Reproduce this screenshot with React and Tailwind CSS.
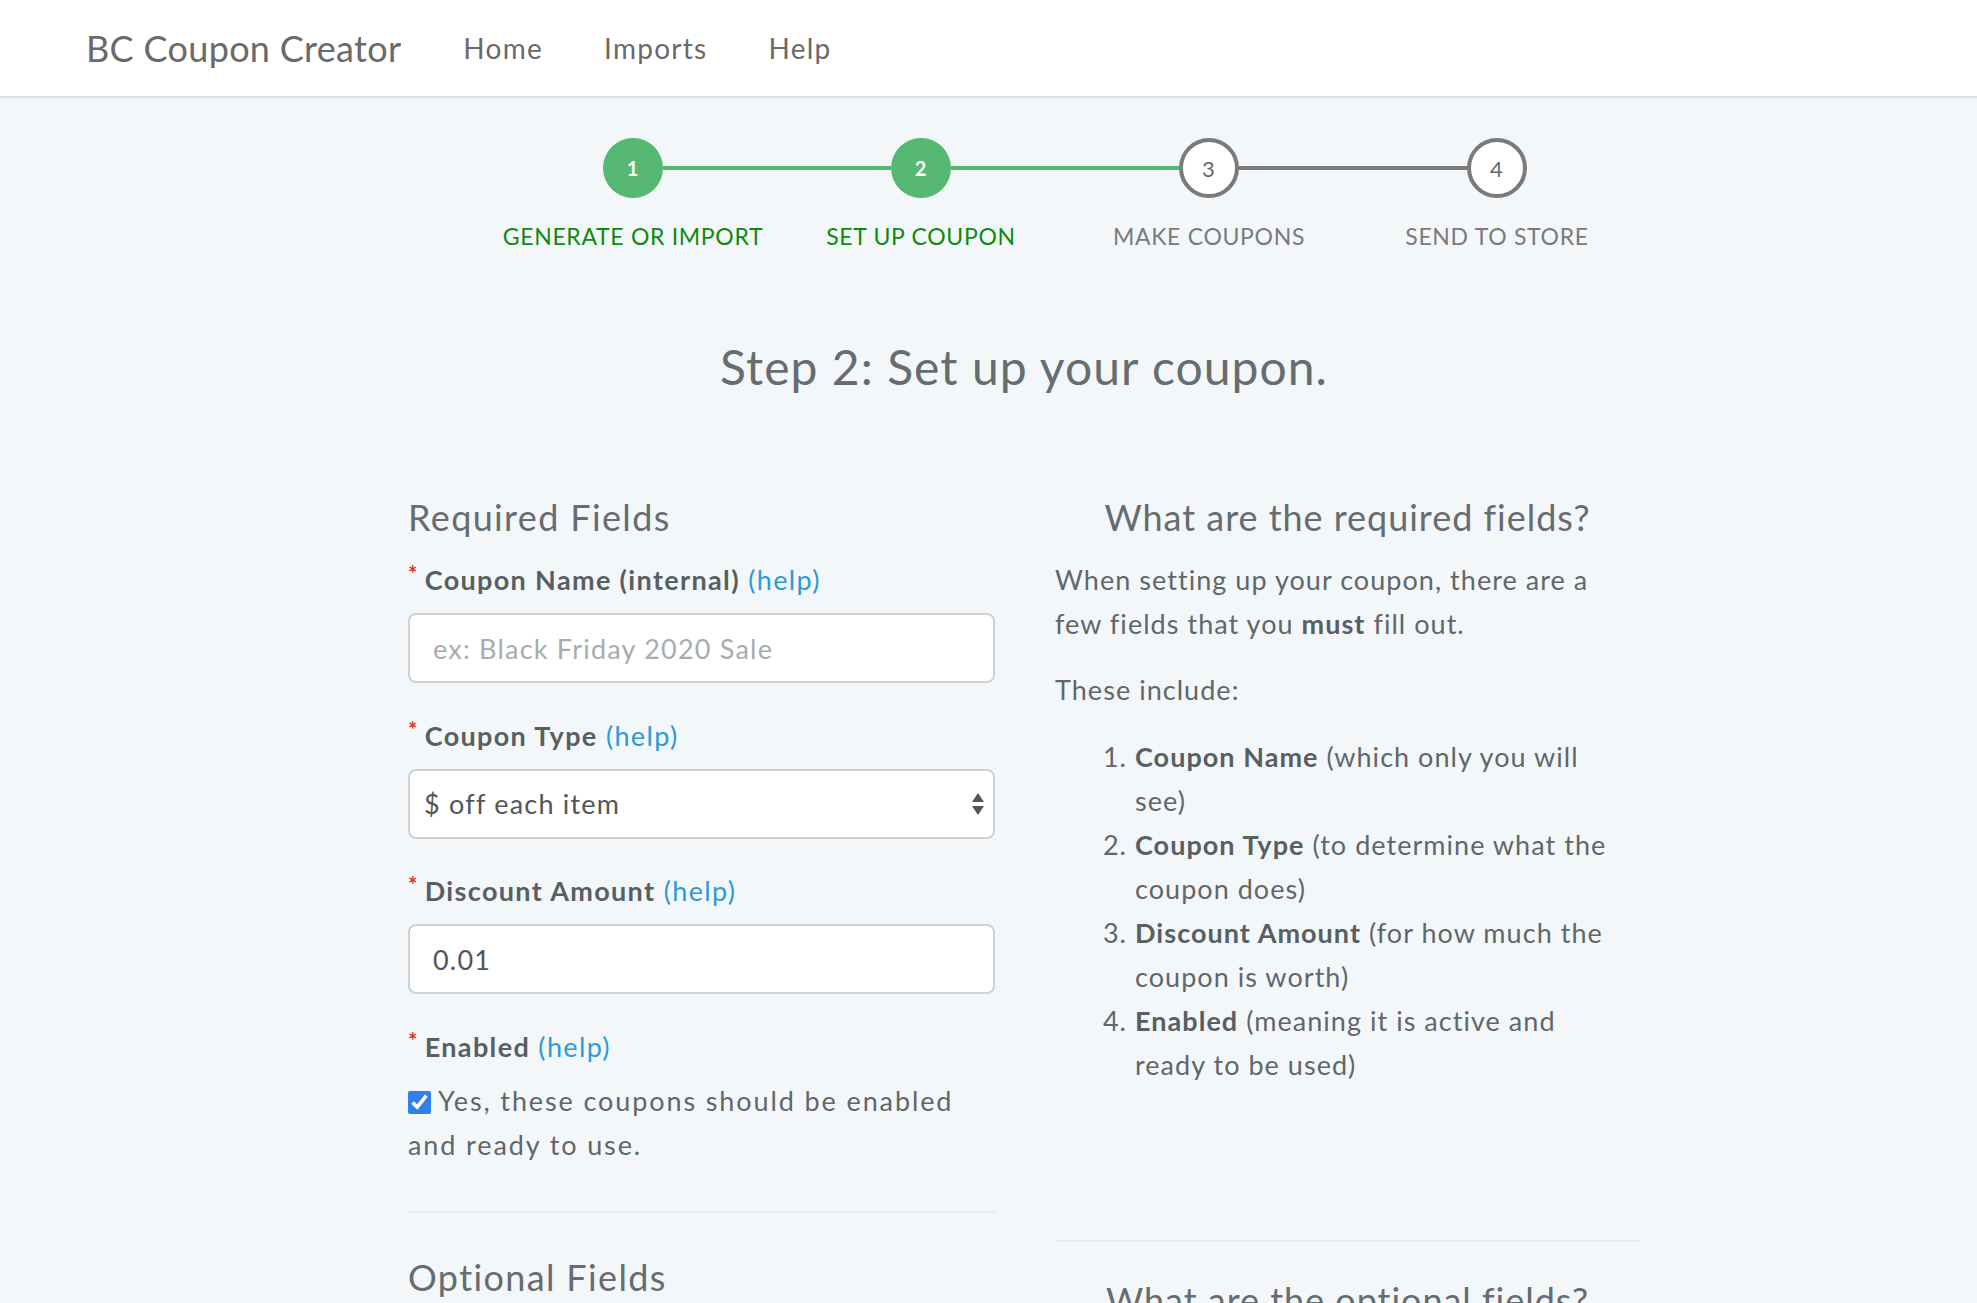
import { useState } from 'react';

const GREEN = 'bg-[#57b874]';

const steps = [
  { num: 1, label: 'GENERATE OR IMPORT', done: true, left: 'none', right: 'green' },
  { num: 2, label: 'SET UP COUPON', done: true, left: 'green', right: 'green' },
  { num: 3, label: 'MAKE COUPONS', done: false, left: 'green', right: 'gray' },
  { num: 4, label: 'SEND TO STORE', done: false, left: 'gray', right: 'none' },
];

const lineClass = (kind) =>
  kind === 'green' ? 'h-[4px] flex-1 bg-[#57b874]' : kind === 'gray' ? 'h-[4px] flex-1 bg-[#7a7a7a]' : 'h-[4px] flex-1 bg-transparent';

const Step = ({ num, label, done, left, right }) => (
  <div className="flex flex-col items-center">
    <div className="flex items-center w-full">
      <div className={lineClass(left)} />
      {done ? (
        <div className={`w-[60px] h-[60px] rounded-full ${GREEN} text-white font-bold text-[20px] flex items-center justify-center`}>
          {num}
        </div>
      ) : (
        <div className="w-[60px] h-[60px] rounded-full border-[4px] border-[#7a7a7a] bg-white text-[#666] text-[22px] flex items-center justify-center">
          {num}
        </div>
      )}
      <div className={lineClass(right)} />
    </div>
    <div
      className={`mt-[24px] text-[23px] leading-[28px] tracking-[0.03em] whitespace-nowrap ${done ? 'text-[#0e8a0e]' : 'text-[#7a7a7a]'}`}
    >
      {label}
    </div>
  </div>
);

const FieldLabel = ({ children, className = '' }) => (
  <div className={`text-[27px] leading-[36px] tracking-[0.05em] text-[#585f62] ${className}`}>
    <span className="text-[#e0301e] text-[22px] font-bold leading-[24px] align-top mr-[6px]">*</span>
    <span className="font-bold">{children}</span>{' '}
    <a href="#" className="text-[#2b9ad6]">(help)</a>
  </div>
);

const inputClass =
  'mt-[15px] block w-full h-[70px] rounded-[8px] border-2 border-[#cfd2d4] bg-white px-[23px] text-[27px] tracking-[0.045em] text-[#555] placeholder:text-[#a7acaf] outline-none';

export default function App() {
  const [enabled, setEnabled] = useState(true);
  const [name, setName] = useState('');
  const [amount, setAmount] = useState('0.01');

  return (
    <div className="min-h-screen bg-[#f4f7fa] font-['Lato',sans-serif] tracking-[0.065em] text-[#5f6769]">
      {/* Navbar */}
      <nav className="h-[98px] bg-white border-b-2 border-[#d6e2ee] flex items-center pl-[86px] tracking-[0.02em]">
        <span className="text-[36px] text-[#6a6a6a] mr-[62px]">BC Coupon Creator</span>
        <div className="flex items-center gap-[61px] text-[28px] tracking-[0.045em] text-[#6a6a6a]">
          <a href="#">Home</a>
          <a href="#">Imports</a>
          <a href="#">Help</a>
        </div>
      </nav>

      <main className="ml-[408px] w-[1232px]">
        {/* Stepper */}
        <div className="mt-[40px] ml-[81px] w-[1152px] grid grid-cols-4">
          {steps.map((s) => (
            <Step key={s.num} {...s} />
          ))}
        </div>

        <h1 className="mt-[89px] text-center text-[48px] leading-[56px] tracking-[0.022em] text-[#666c6f]">
          Step 2: Set up your coupon.
        </h1>

        <div className="mt-[100px] grid grid-cols-[587px_585px] gap-x-[60px] items-start">
          {/* Left column */}
          <div>
            <h2 className="text-[36px] leading-[44px] tracking-[0.038em] text-[#666c6f]">Required Fields</h2>

            <FieldLabel className="mt-[23px]">Coupon Name (internal)</FieldLabel>
            <input
              className={inputClass}
              placeholder="ex: Black Friday 2020 Sale"
              value={name}
              onChange={(e) => setName(e.target.value)}
            />

            <FieldLabel className="mt-[35px]">Coupon Type</FieldLabel>
            <div className="relative mt-[15px]">
              <select className="block w-full h-[70px] appearance-none rounded-[8px] border-2 border-[#cfd2d4] bg-white pl-[14px] pr-[40px] text-[27px] tracking-[0.045em] text-[#555] outline-none">
                <option>$ off each item</option>
                <option>% off each item</option>
                <option>$ off the order total</option>
                <option>Free shipping</option>
              </select>
              <svg
                className="absolute right-[10px] top-[23px] pointer-events-none"
                width="14"
                height="24"
                viewBox="0 0 14 24"
              >
                <path d="M7 1 L13 10 L1 10 Z" fill="#555" />
                <path d="M1 14 L13 14 L7 23 Z" fill="#555" />
              </svg>
            </div>

            <FieldLabel className="mt-[34px]">Discount Amount</FieldLabel>
            <input className={inputClass} value={amount} onChange={(e) => setAmount(e.target.value)} />

            <FieldLabel className="mt-[35px]">Enabled</FieldLabel>
            <p className="mt-[14px] text-[27px] leading-[44px] tracking-[0.07em]">
              <input
                type="checkbox"
                checked={enabled}
                onChange={() => setEnabled(!enabled)}
                className="w-[23px] h-[23px] align-[-3px] mr-[7px] accent-[#2f80ed]"
              />
              Yes, these coupons should be enabled
              <br />
              and ready to use.
            </p>

            <div className="mt-[44px] h-[2px] bg-[#e9ecee]" />

            <h2 className="mt-[42px] text-[36px] leading-[44px] tracking-[0.038em] text-[#666c6f]">Optional Fields</h2>
          </div>

          {/* Right column */}
          <div>
            <h2 className="text-center text-[36px] leading-[44px] tracking-[0.027em] text-[#666c6f]">
              What are the required fields?
            </h2>
            <p className="mt-[19px] text-[27px] leading-[44px]">
              When setting up your coupon, there are a
              <br />
              few fields that you <b className="text-[#575f62]">must</b> fill out.
            </p>
            <p className="mt-[22px] text-[27px] leading-[44px]">These include:</p>
            <ol className="mt-[23px] list-decimal pl-[80px] text-[27px] leading-[44px]">
              <li>
                <b className="text-[#575f62]">Coupon Name</b> (which only you will
                <br />
                see)
              </li>
              <li>
                <b className="text-[#575f62]">Coupon Type</b> (to determine what the
                <br />
                coupon does)
              </li>
              <li>
                <b className="text-[#575f62]">Discount Amount</b> (for how much the
                <br />
                coupon is worth)
              </li>
              <li>
                <b className="text-[#575f62]">Enabled</b> (meaning it is active and
                <br />
                ready to be used)
              </li>
            </ol>

            <div className="mt-[153px] h-[2px] bg-[#e9ecee]" />

            <h2 className="mt-[36px] text-center text-[36px] leading-[44px] tracking-[0.027em] text-[#666c6f]">
              What are the optional fields?
            </h2>
          </div>
        </div>
        <div className="h-[200px]" />
      </main>
    </div>
  );
}
